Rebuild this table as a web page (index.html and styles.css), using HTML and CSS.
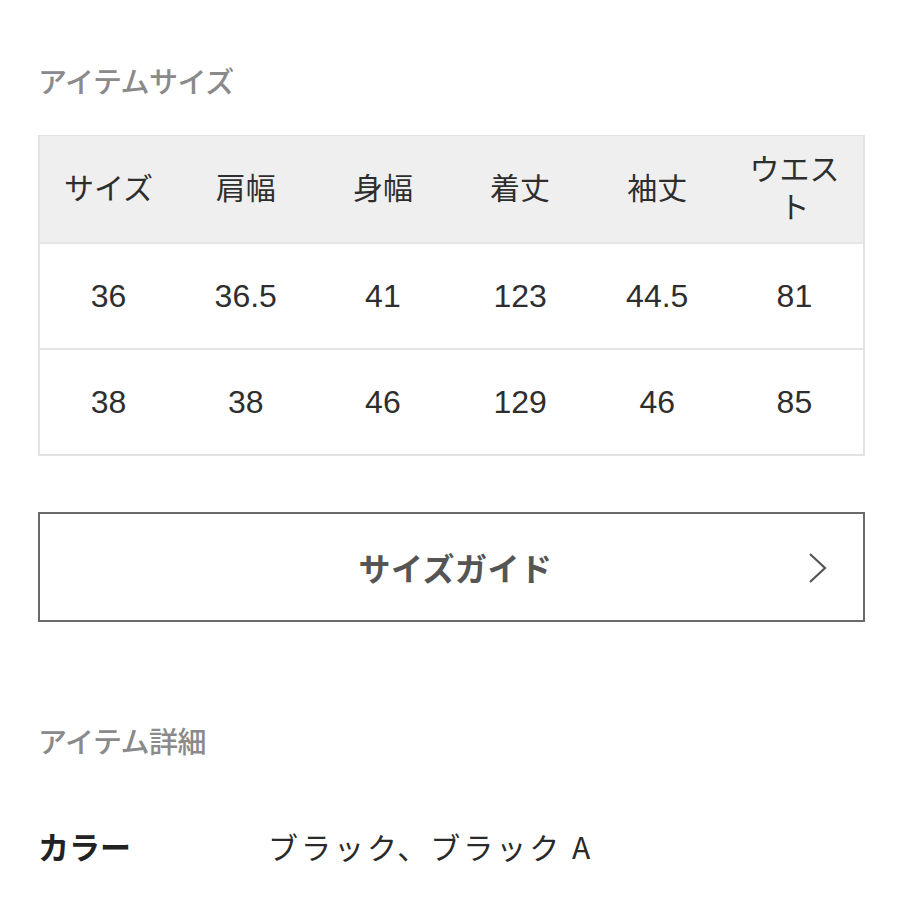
FILE: index.html
```html
<!DOCTYPE html>
<html lang="ja">
<head>
<meta charset="utf-8">
<link rel="stylesheet" href="styles.css">
</head>
<body>
<div class="page">
  <h2 class="section-title size-title">アイテムサイズ</h2>
  <div class="size-table">
    <div class="row head">
      <div class="cell">サイズ</div>
      <div class="cell">肩幅</div>
      <div class="cell">身幅</div>
      <div class="cell">着丈</div>
      <div class="cell">袖丈</div>
      <div class="cell narrow">ウエスト</div>
    </div>
    <div class="row">
      <div class="cell num">36</div>
      <div class="cell num">36.5</div>
      <div class="cell num">41</div>
      <div class="cell num">123</div>
      <div class="cell num">44.5</div>
      <div class="cell num">81</div>
    </div>
    <div class="row">
      <div class="cell num">38</div>
      <div class="cell num">38</div>
      <div class="cell num">46</div>
      <div class="cell num">129</div>
      <div class="cell num">46</div>
      <div class="cell num">85</div>
    </div>
  </div>
  <a class="guide-btn" href="#">
    <span class="guide-label">サイズガイド</span>
    <svg class="chevron" width="20" height="32" viewBox="0 0 20 32"><path d="M2 2 L17 16 L2 30" fill="none" stroke="#555" stroke-width="2.2"/></svg>
  </a>
  <h2 class="section-title detail-title">アイテム詳細</h2>
  <div class="detail-row">
    <div class="detail-key">カラー</div>
    <div class="detail-val">ブラック、ブラック A</div>
  </div>
</div>
</body>
</html>
```
FILE: styles.css
```css
* { box-sizing: border-box; }
html, body { margin: 0; padding: 0; background: #fff; }
body {
  font-family: "Noto Sans CJK JP", "Liberation Sans", sans-serif;
  color: #333;
}
.page {
  width: 827px;
  margin-left: 38px;
  padding-top: 60px;
}
.section-title {
  margin: 0;
  font-size: 29px;
  font-weight: 500;
  color: #8a8a8a;
  line-height: 40px;
  letter-spacing: -0.5px;
}
.size-title { margin-bottom: 35px; }
.size-table {
  border: 2px solid #e2e2e2;
  border-top-width: 1px;
}
.row {
  display: grid;
  grid-template-columns: repeat(6, 1fr);
  height: 106px;
  align-items: center;
  border-top: 2px solid #e6e6e6;
}
.row:first-child { border-top: none; }
.row.head { background: #efefef; height: 106px; padding-bottom: 6px; }
.cell {
  text-align: center;
  font-size: 30px;
  color: #2e2e2e;
  line-height: 38px;
}
.cell.narrow { padding: 0 20px; }
.cell.num {
  font-family: "Liberation Sans", "Noto Sans CJK JP", sans-serif;
  font-size: 32px;
}
.guide-btn {
  display: flex;
  align-items: center;
  justify-content: center;
  position: relative;
  height: 110px;
  margin-top: 56px;
  border: 2px solid #6a6a6a;
  text-decoration: none;
}
.guide-label {
  font-size: 32px;
  font-weight: 700;
  color: #555;
  letter-spacing: 0.5px;
  padding-left: 8px;
}
.chevron {
  position: absolute;
  right: 35px;
  top: 38px;
}
.detail-title { margin-top: 98px; }
.detail-row {
  display: flex;
  align-items: center;
  margin-top: 63px;
}
.detail-key {
  width: 230px;
  font-size: 31px;
  font-weight: 700;
  color: #222;
}
.detail-val {
  font-size: 30px;
  color: #2a2a2a;
  letter-spacing: 3px;
}
```
